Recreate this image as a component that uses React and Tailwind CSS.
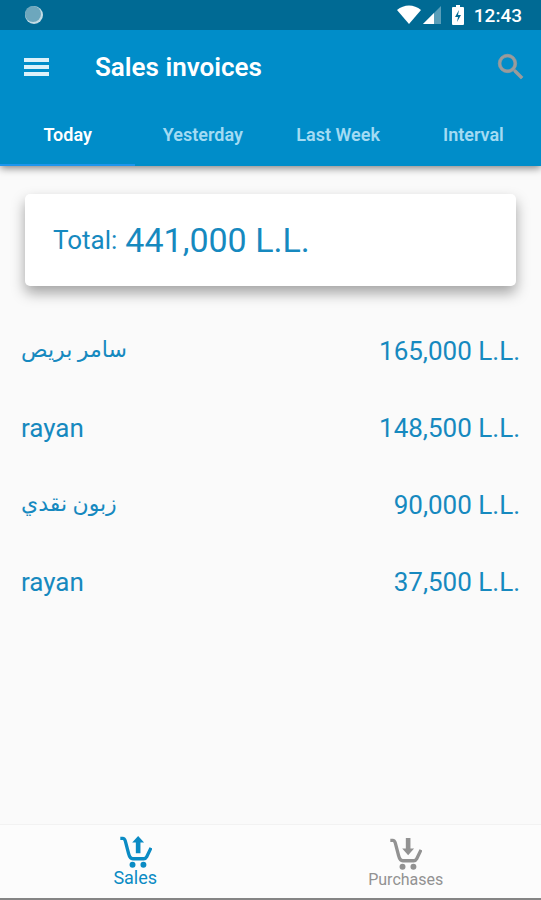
import React, { useState } from "react";

const tabs = ["Today", "Yesterday", "Last Week", "Interval"];

const invoices = [
    { id: 1, customer: "سامر بريص", lang: "ar", amount: "165,000 L.L." },
    { id: 2, customer: "rayan", lang: "en", amount: "148,500 L.L." },
    { id: 3, customer: "زبون نقدي", lang: "ar", amount: "90,000 L.L." },
    { id: 4, customer: "rayan", lang: "en", amount: "37,500 L.L." }
];

const CartIcon = ({ direction }) => (
    <svg viewBox="0 0 100 100" className="size-[33px]" fill="none" aria-hidden="true">
        <path
            d="M4 10h7q6 0 8 8l10 38q4 16 13 16h33q6 0 9-6l13-27"
            stroke="currentColor"
            strokeWidth="10"
            strokeLinejoin="round"
        />
        <circle cx="41" cy="90" r="9" fill="currentColor" />
        <circle cx="74" cy="90" r="9" fill="currentColor" />
        {direction === "up" ? (
            <path d="M58 3l18 20H65v32H51V23H40z" fill="currentColor" />
        ) : (
            <path d="M58 55l18-20H65V3H51v32H40z" fill="currentColor" />
        )}
    </svg>
);

const StatusBar = () => (
    <div className="flex h-[30px] items-center bg-[#006a94] pr-[19px] pl-6 text-white">
        <svg viewBox="0 0 20 20" className="size-5" aria-hidden="true">
            <circle cx="10" cy="10" r="9" fill="#c3dce5" />
            <circle cx="9" cy="9" r="8" fill="#6da7bd" />
        </svg>
        <div className="ml-auto flex items-center">
            <svg viewBox="0 0 24 20" className="h-5 w-6" fill="currentColor" aria-hidden="true">
                <path d="M12 19L0 5C7-1 17-1 24 5z" />
            </svg>
            <svg viewBox="0 0 18 18" className="ml-[2px] size-[18px]" fill="currentColor" aria-hidden="true">
                <path d="M0 18L18 0v18z" fillOpacity="0.35" />
                <path d="M0 18L11 7v11z" />
            </svg>
            <svg viewBox="0 0 12 20" className="ml-[11px] h-5 w-3" aria-hidden="true">
                <path d="M1 2h3V0h4v2h3q1 0 1 1v16q0 1-1 1H1q-1 0-1-1V3q0-1 1-1z" fill="currentColor" />
                <path d="M7 5l-4 7h3l-1 5 4-7H6z" fill="#006a94" />
            </svg>
            <span className="ml-[10px] text-[19px] leading-none font-medium">12:43</span>
        </div>
    </div>
);

const App = () => {
    const [activeTab, setActiveTab] = useState("Today");
    const [section, setSection] = useState("sales");

    const navClass = (name) => (section === name ? "text-[#0a8bc4]" : "text-[#929292]");

    return (
        <div
            className="flex min-h-screen flex-col border-b-2 border-[#858585] bg-[#fafafa] text-[#1689bf]"
            style={{ fontFamily: 'Roboto, "Noto Sans", "DejaVu Sans", sans-serif' }}
        >
            <header className="bg-[#008dc9] text-white shadow-[0_2px_8px_rgba(0,0,0,0.5)]">
                <StatusBar />
                <div className="flex h-[74px] items-center px-6">
                    <button type="button" aria-label="Menu" className="w-[25px]">
                        <svg viewBox="0 0 25 18" className="h-[18px] w-[25px]" fill="#dcf1fa" aria-hidden="true">
                            <path d="M0 0h25v4H0zM0 7h25v4H0zM0 14h25v4H0z" />
                        </svg>
                    </button>
                    <h1 className="ml-[46px] text-[26px] leading-8 font-semibold">Sales invoices</h1>
                    <button type="button" aria-label="Search" className="-mr-[11px] ml-auto">
                        <svg viewBox="0 0 24 24" className="size-[34px]" fill="#9b9b9b" stroke="#9b9b9b" strokeWidth="0.5" aria-hidden="true">
                            <path d="M15.5 14h-.79l-.28-.27A6.47 6.47 0 0 0 16 9.5 6.5 6.5 0 1 0 9.5 16c1.61 0 3.09-.59 4.23-1.57l.27.28v.79l5 4.99L20.49 19l-4.99-5zm-6 0C7.01 14 5 11.99 5 9.5S7.01 5 9.5 5 14 7.01 14 9.5 11.99 14 9.5 14z" />
                        </svg>
                    </button>
                </div>
                <nav className="grid h-[62px] grid-cols-4">
                    {tabs.map((tab) => (
                        <button
                            key={tab}
                            type="button"
                            onClick={() => setActiveTab(tab)}
                            className={
                                activeTab === tab
                                    ? "border-b-2 border-[#1e96ee] text-[18px] font-semibold text-white"
                                    : "border-b-2 border-transparent text-[18px] font-semibold text-[#a3dbf3]"
                            }
                        >
                            {tab}
                        </button>
                    ))}
                </nav>
            </header>

            <main className="flex-1">
                <section className="mx-[25px] mt-7 flex h-[92px] items-center rounded-[5px] bg-white px-7 shadow-[0_7px_14px_rgba(0,0,0,0.35)]">
                    <p className="flex items-center gap-2">
                        <span className="text-[26px]">Total:</span>
                        <span className="text-[34px]">441,000 L.L.</span>
                    </p>
                </section>

                <ul className="mt-[27px] px-[21px]">
                    {invoices.map((invoice) => (
                        <li key={invoice.id} className="flex h-[77px] items-center justify-between text-[26px]">
                            <span lang={invoice.lang} className={invoice.lang === "ar" ? "pb-1 text-[22px]" : ""}>
                                {invoice.customer}
                            </span>
                            <span>{invoice.amount}</span>
                        </li>
                    ))}
                </ul>
            </main>

            <footer className="grid h-[74px] grid-cols-2 border-t border-[#f2f2f2] bg-[#fcfcfc]">
                <button
                    type="button"
                    onClick={() => setSection("sales")}
                    className={`flex flex-col items-center justify-center ${navClass("sales")}`}
                >
                    <CartIcon direction="up" />
                    <span className="text-[18px] leading-5">Sales</span>
                </button>
                <button
                    type="button"
                    onClick={() => setSection("purchases")}
                    className={`flex flex-col items-center justify-center pt-1 ${navClass("purchases")}`}
                >
                    <CartIcon direction="down" />
                    <span className="text-[16px] leading-5">Purchases</span>
                </button>
            </footer>
        </div>
    );
};

export default App;
